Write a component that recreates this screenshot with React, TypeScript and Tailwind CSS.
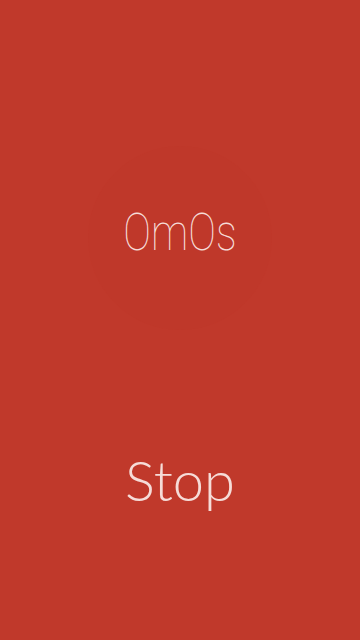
import React from "react";

export default function App() {
  return (
    <div className="w-[360px] h-[640px] bg-[#c0392b] flex flex-col items-center" style={{ fontFamily: "Lato, 'Open Sans', sans-serif" }}>
      <div className="mt-[146px] w-[184px] h-[184px] rounded-full bg-[#bf382a] flex items-center justify-center pb-[10px]">
        <span className="text-[52px] font-thin text-[#f6dcd8] leading-none scale-x-[0.8] inline-block" style={{ fontFamily: "Roboto, sans-serif" }}>OmOs</span>
      </div>
      <div className="mt-[122px] text-[56px] font-light text-[#f6dcd8] leading-none">Stop</div>
    </div>
  );
}
